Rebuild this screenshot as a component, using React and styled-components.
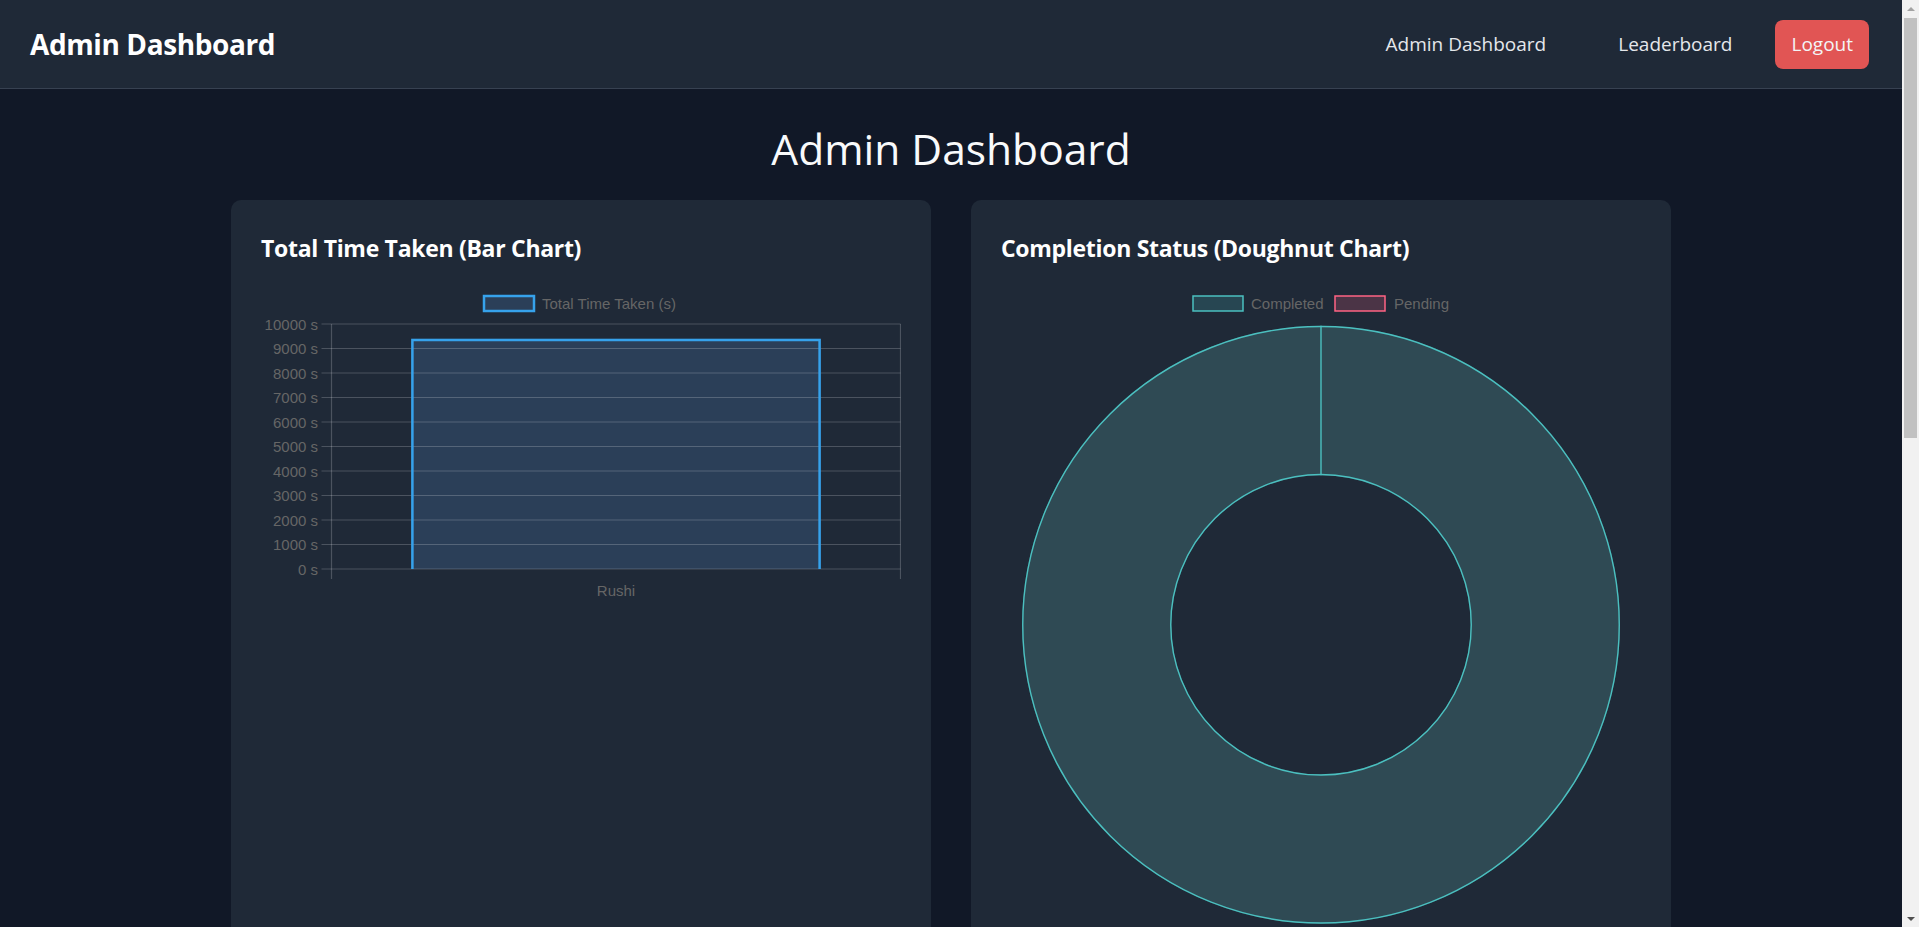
import styled, { createGlobalStyle } from 'styled-components'

const GlobalStyle = createGlobalStyle`
    html, body {
        margin: 0;
        padding: 0;
        height: 100%;
        overflow: hidden;
        background: #111827;
    }
    body {
        font-family: 'Open Sans', 'Noto Sans', sans-serif;
        color: #ffffff;
    }
`

const colors = {
    page: '#111827',
    panel: '#1f2937',
    line: '#374151',
    grid: 'rgba(255, 255, 255, 0.2)',
    tick: '#666666',
    red: '#e15554',
}

const Layout = styled.div`
    display: flex;
    height: 100vh;
    background: ${colors.page};
`

const Viewport = styled.div`
    flex: 1;
    min-width: 0;
    overflow-y: auto;
    scrollbar-width: none;
    &::-webkit-scrollbar {
        display: none;
    }
`

const Scrollbar = styled.div`
    width: 17px;
    flex-shrink: 0;
    display: flex;
    flex-direction: column;
    background: #f1f1f1;
`

const ScrollArrow = styled.div`
    height: 17px;
    flex-shrink: 0;
    display: flex;
    align-items: center;
    justify-content: center;

    &::before {
        content: '';
        border-left: 4px solid transparent;
        border-right: 4px solid transparent;
        ${props => props.$down
            ? 'border-top: 4px solid #505050;'
            : 'border-bottom: 4px solid #a3a3a3;'}
    }
`

const ScrollThumb = styled.div`
    height: 420px;
    margin: 1px 2px 0;
    background: #c1c1c1;
`

const ScrollTrack = styled.div`
    flex: 1;
`

const Nav = styled.nav`
    height: 88px;
    display: flex;
    align-items: center;
    justify-content: space-between;
    padding: 0 33px 0 30px;
    background: ${colors.panel};
    border-bottom: 1px solid ${colors.line};
`

const Brand = styled.div`
    font-size: 28px;
    font-weight: 700;
    letter-spacing: -0.4px;
    color: #ffffff;
`

const NavMenu = styled.div`
    display: flex;
    align-items: center;
`

const NavLink = styled.a`
    font-size: 19px;
    color: #e5e7eb;
    text-decoration: none;
    margin-right: ${props => props.$gap}px;
    cursor: pointer;
`

const LogoutButton = styled.button`
    font-family: inherit;
    font-size: 19px;
    line-height: 30px;
    padding: 9px 16px 10px;
    border: none;
    border-radius: 8px;
    color: #f3f4f6;
    background: ${colors.red};
    cursor: pointer;
`

const Main = styled.main`
    min-height: 1880px;
    padding-top: 35px;
`

const PageTitle = styled.h1`
    margin: 0 0 26px;
    text-align: center;
    font-size: 42.5px;
    font-weight: 400;
    line-height: 50px;
    color: #f9fafb;
`

const ChartGrid = styled.div`
    display: grid;
    grid-template-columns: repeat(2, 700px);
    justify-content: center;
    gap: 40px;
`

const Card = styled.section`
    background: ${colors.panel};
    border-radius: 10px;
    padding: 30px;
`

const CardTitle = styled.h2`
    margin: 0 0 18px;
    font-size: 23px;
    font-weight: 700;
    line-height: 36px;
    letter-spacing: -0.3px;
    color: #ffffff;
`

const ChartSvg = styled.svg`
    display: block;
    font-family: 'Liberation Sans', Arial, sans-serif;
    font-size: 15px;
`

const barData = [{ label: 'Rushi', value: 9400 }]

function BarChart() {
    const top = 40
    const bottom = 285
    const left = 70.5
    const right = 639.5
    const step = (bottom - top) / 10
    const ticks = Array.from({ length: 11 }, (_, i) => i * 1000)
    const yOf = v => top + ((10000 - v) / 1000) * step
    const slot = (right - left) / barData.length

    const bars = barData.map((d, i) => {
        const cx = left + slot * i + slot / 2
        const w = slot * 0.72
        return { ...d, cx, w, x: cx - w / 2, y: yOf(d.value) }
    })

    return (
        <ChartSvg width="640" height="320" viewBox="0 0 640 320">
            <rect x="223" y="12" width="50" height="15" fill="#2b3f58" stroke="rgb(54, 162, 235)" strokeWidth="2.5" />
            <text x="281" y="19.5" fill={colors.tick} dominantBaseline="central">Total Time Taken (s)</text>

            {bars.map(b => (
                <g key={b.label}>
                    <rect x={b.x} y={b.y} width={b.w} height={bottom - b.y} fill="#2b3f58" />
                    <text x={b.cx} y="306" fill={colors.tick} textAnchor="middle" dominantBaseline="central">{b.label}</text>
                </g>
            ))}

            {ticks.map(v => (
                <g key={v}>
                    <line x1="60.5" x2={right} y1={yOf(v)} y2={yOf(v)} stroke={colors.grid} strokeWidth="1.2" />
                    <text x="57" y={yOf(v)} fill={colors.tick} textAnchor="end" dominantBaseline="central">{v} s</text>
                </g>
            ))}
            <line x1={left} x2={left} y1={top} y2={bottom + 10} stroke={colors.grid} strokeWidth="1.2" />
            <line x1={right} x2={right} y1={top} y2={bottom + 10} stroke={colors.grid} strokeWidth="1.2" />

            {bars.map(b => (
                <path
                    key={b.label}
                    d={`M${b.x + 1.25} ${bottom} V${b.y + 1.25} H${b.x + b.w - 1.25} V${bottom}`}
                    fill="none"
                    stroke="rgb(54, 162, 235)"
                    strokeWidth="2.5"
                />
            ))}
        </ChartSvg>
    )
}

const legendItems = [
    { label: 'Completed', box: 192, text: 250, fill: 'rgba(75, 192, 192, 0.2)', stroke: 'rgb(75, 192, 192)' },
    { label: 'Pending', box: 334, text: 393, fill: 'rgba(255, 99, 132, 0.2)', stroke: 'rgb(255, 99, 132)' },
]

function DoughnutChart() {
    const cx = 320
    const cy = 340.8
    const R = 299
    const r = 149.5
    const ring = `M${cx} ${cy - R} A${R} ${R} 0 1 1 ${cx} ${cy + R} A${R} ${R} 0 1 1 ${cx} ${cy - R} Z
        M${cx} ${cy - r} A${r} ${r} 0 1 0 ${cx} ${cy + r} A${r} ${r} 0 1 0 ${cx} ${cy - r} Z`

    return (
        <ChartSvg width="640" height="640" viewBox="0 0 640 640">
            {legendItems.map(item => (
                <g key={item.label}>
                    <rect x={item.box} y="12" width="50" height="15" fill={item.fill} stroke={item.stroke} strokeWidth="1.5" />
                    <text x={item.text} y="19.5" fill={colors.tick} dominantBaseline="central">{item.label}</text>
                </g>
            ))}
            <path d={ring} fill="#2f4a54" fillRule="evenodd" />
            <circle cx={cx} cy={cy} r={R - 0.75} fill="none" stroke="rgb(75, 192, 192)" strokeWidth="1.4" />
            <circle cx={cx} cy={cy} r={r + 0.75} fill="none" stroke="rgb(75, 192, 192)" strokeWidth="1.4" />
            <line x1={cx} x2={cx} y1={cy - R} y2={cy - r} stroke="rgb(75, 192, 192)" strokeWidth="1.4" />
        </ChartSvg>
    )
}

function App() {
    return (
        <Layout>
            <GlobalStyle />
            <Viewport>
                <Nav>
                    <Brand>Admin Dashboard</Brand>
                    <NavMenu>
                        <NavLink $gap={72}>Admin Dashboard</NavLink>
                        <NavLink $gap={43}>Leaderboard</NavLink>
                        <LogoutButton>Logout</LogoutButton>
                    </NavMenu>
                </Nav>
                <Main>
                    <PageTitle>Admin Dashboard</PageTitle>
                    <ChartGrid>
                        <Card>
                            <CardTitle>Total Time Taken (Bar Chart)</CardTitle>
                            <BarChart />
                        </Card>
                        <Card>
                            <CardTitle>Completion Status (Doughnut Chart)</CardTitle>
                            <DoughnutChart />
                        </Card>
                    </ChartGrid>
                </Main>
            </Viewport>
            <Scrollbar>
                <ScrollArrow />
                <ScrollThumb />
                <ScrollTrack />
                <ScrollArrow $down />
            </Scrollbar>
        </Layout>
    )
}

export default App
